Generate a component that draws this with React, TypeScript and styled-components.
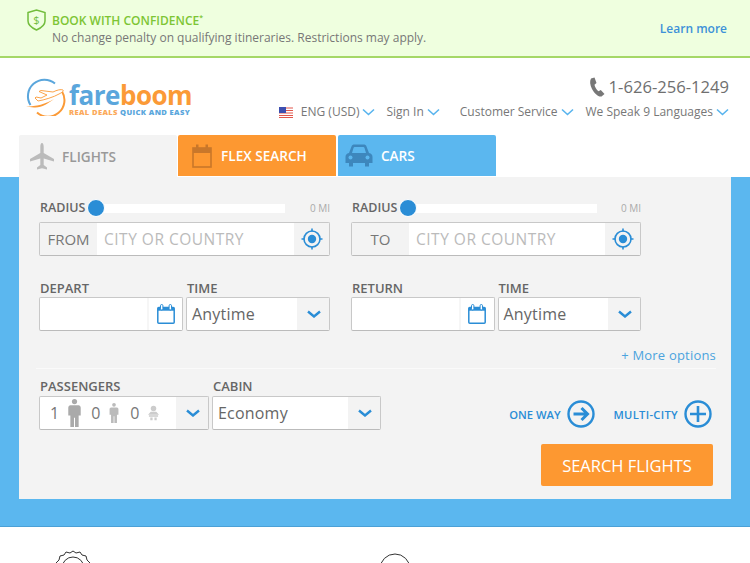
import React from "react";
import styled, { createGlobalStyle } from "styled-components";

const GlobalStyle = createGlobalStyle`
  html, body {
    margin: 0;
    padding: 0;
    background: #fff;
    font-family: "Open Sans", "Liberation Sans", sans-serif;
    color: #666;
    overflow: hidden;
  }
  * { box-sizing: border-box; }
`;

const Page = styled.div`
  width: 750px;
  height: 563px;
  overflow: hidden;
`;

/* confidence banner */
const Banner = styled.div`
  height: 58px;
  background: #efffdf;
  border-bottom: 2px solid #a5d867;
  padding: 9px 23px 0 27px;
  display: flex;
  align-items: flex-start;
`;
const BannerText = styled.div`
  margin-left: 6px;
  flex: 1;
  padding-top: 3px;
`;
const BannerTitle = styled.div`
  font-size: 12px;
  line-height: 17px;
  font-weight: 600;
  color: #7dc534;
  sup {
    font-size: 7px;
    line-height: 0;
    vertical-align: 5px;
  }
`;
const BannerSub = styled.div`
  font-size: 12px;
  line-height: 17px;
  color: #777;
`;
const LearnMore = styled.a`
  font-size: 12px;
  font-weight: 600;
  color: #3d92d8;
  margin-top: 11px;
`;

/* header */
const Header = styled.header`
  height: 77px;
  padding: 17px 21px 0 26px;
  display: flex;
  justify-content: space-between;
`;
const Logo = styled.div`
  display: flex;
  align-items: flex-start;
  padding-top: 1px;
`;
const LogoWords = styled.div`
  margin-left: -1px;
  margin-top: 7px;
`;
const LogoName = styled.div`
  font-size: 26px;
  line-height: 25px;
  font-weight: 700;
  letter-spacing: -0.5px;
  color: #5aa6dc;
  span { color: #fb9a37; }
`;
const LogoTag = styled.div`
  font-size: 7.6px;
  line-height: 9px;
  font-weight: 800;
  letter-spacing: 0.35px;
  color: #5aa6dc;
  white-space: nowrap;
  span { color: #fba95a; }
`;
const HeaderRight = styled.div`
  display: flex;
  flex-direction: column;
  align-items: flex-end;
`;
const Phone = styled.div`
  display: flex;
  align-items: center;
  gap: 4px;
  font-size: 16.6px;
  line-height: 24px;
  color: #6f6f6f;
`;
const NavRow = styled.nav`
  display: flex;
  margin-top: 3px;
`;
const NavItem = styled.div<{ $gap: number }>`
  display: flex;
  align-items: center;
  gap: 3px;
  font-size: 12px;
  line-height: 20px;
  color: #777;
  margin-left: ${(p) => p.$gap}px;
  white-space: nowrap;
`;
const NavLang = styled.span`
  margin-left: 5px;
`;

/* tabs */
const Tabs = styled.div`
  height: 42px;
  padding-left: 19px;
  display: flex;
  align-items: flex-start;
  gap: 1px;
`;
const Tab = styled.div<{ $bg: string; $color: string; $ml?: number; $pl: number; $h: number; $gap: number }>`
  width: 158px;
  height: ${(p) => p.$h}px;
  background: ${(p) => p.$bg};
  color: ${(p) => p.$color};
  margin-left: ${(p) => p.$ml ?? 0}px;
  border-radius: 2px 2px 0 0;
  display: flex;
  align-items: center;
  padding-left: ${(p) => p.$pl}px;
  gap: ${(p) => p.$gap}px;
  font-size: 13.6px;
  font-weight: 600;
`;

/* search band */
const Band = styled.div`
  height: 350px;
  background: #5bb7ef;
  border-bottom: 1px solid #4ba0d6;
  padding: 0 19px;
`;
const Panel = styled.div`
  height: 322px;
  background: #f3f3f3;
  padding: 23px 14px 0 20px;
`;
const TwoCols = styled.div`
  display: grid;
  grid-template-columns: 291px 290px;
  column-gap: 21px;
`;
const Col = styled.div`
  display: flex;
  flex-direction: column;
`;
const SliderRow = styled.div`
  display: flex;
  align-items: center;
  height: 16px;
  margin-left: 1px;
  margin-bottom: 6px;
`;
const FieldLabel = styled.label<{ $size?: number }>`
  display: block;
  font-size: ${(p) => p.$size ?? 13}px;
  line-height: 16px;
  font-weight: 600;
  color: #666;
  white-space: nowrap;
`;
const Track = styled.div`
  position: relative;
  width: 189px;
  height: 9px;
  margin-left: 11px;
  background: #fff;
`;
const Thumb = styled.div`
  position: absolute;
  left: -9px;
  top: -5px;
  width: 18px;
  height: 18px;
  border-radius: 50%;
  background: #2a8dd6;
  border: 1px solid #fff;
`;
const Miles = styled.div`
  margin-left: auto;
  font-size: 10px;
  color: #aaa;
`;
const Box = styled.div<{ $w?: number }>`
  display: flex;
  width: ${(p) => (p.$w ? `${p.$w}px` : "100%")};
  height: 34px;
  background: #fff;
  border: 1px solid #c8c8c8;
  border-bottom-color: #bbb;
  border-radius: 2px;
  overflow: hidden;
  flex: none;
`;
const PlaceLabel = styled.div`
  width: 57px;
  background: #f3f3f3;
  display: flex;
  align-items: center;
  justify-content: center;
  font-size: 15px;
  color: #777;
`;
const PlaceInput = styled.div`
  flex: 1;
  display: flex;
  align-items: center;
  padding-left: 7px;
  font-size: 15.5px;
  letter-spacing: 0.5px;
  color: #bbb;
`;
const BoxButton = styled.div<{ $w: number }>`
  width: ${(p) => p.$w}px;
  background: #f3f3f3;
  display: flex;
  align-items: center;
  justify-content: center;
  flex: none;
`;
const SelectButton = styled(BoxButton)`
  padding-left: 2px;
`;
const CalendarButton = styled(BoxButton)`
  background: #fff;
  border-left: 2px solid #f6f6f6;
`;
const Spacer = styled.div`
  flex: 1;
`;
const SelectText = styled.div`
  flex: 1;
  display: flex;
  align-items: center;
  padding-left: 5px;
  font-size: 16px;
  font-weight: 500;
  letter-spacing: 0.2px;
  color: #666;
`;
const DateRow = styled.div`
  display: grid;
  grid-template-columns: 1fr 1fr;
  column-gap: 3px;
  margin-top: 24px;
`;
const LabelledField = styled.div<{ $gap?: number }>`
  display: flex;
  flex-direction: column;
  gap: ${(p) => p.$gap ?? 1}px;
`;
const LabelPad = styled.div`
  padding-left: 1px;
`;
const MoreOptions = styled.div`
  margin: 14px 1px 0 -3px;
  height: 24px;
  line-height: 20px;
  text-align: right;
  font-size: 13px;
  color: #4ba3de;
  letter-spacing: 0.2px;
  border-bottom: 1px solid #fafafa;
`;
const BottomRow = styled.div`
  display: flex;
  margin-top: 9px;
`;
const BottomFields = styled.div`
  display: flex;
  gap: 3px;
`;
const PaxInner = styled.div`
  flex: 1;
  display: flex;
  align-items: center;
  padding-left: 10px;
  font-size: 16px;
  color: #777;
`;
const PaxCount = styled.span`
  margin-right: 9px;
`;
const PaxIcon = styled.svg<{ $mr: number }>`
  margin-right: ${(p) => p.$mr}px;
  flex: none;
`;
const TripLinks = styled.div`
  margin-left: auto;
  margin-right: 5px;
  margin-top: 21px;
  display: flex;
  align-items: center;
  height: 30px;
`;
const TripLink = styled.div<{ $ml?: number; $spacing?: number }>`
  display: flex;
  align-items: center;
  gap: 6px;
  margin-left: ${(p) => p.$ml ?? 0}px;
  font-size: 11.2px;
  letter-spacing: ${(p) => p.$spacing ?? 0}px;
  font-weight: 600;
  color: #2a8dd6;
`;
const SearchRow = styled.div`
  display: flex;
  justify-content: flex-end;
  margin-top: 14px;
  margin-right: 4px;
`;
const SearchButton = styled.button`
  width: 172px;
  height: 42px;
  border: 0;
  border-radius: 2px;
  background: #fd9831;
  color: #fff;
  font-family: inherit;
  font-size: 16.5px;
`;

/* footer peek */
const Footer = styled.div`
  position: relative;
  height: 36px;
  overflow: hidden;
`;
const FooterIcon = styled.svg<{ $left: number; $top: number }>`
  position: absolute;
  left: ${(p) => p.$left}px;
  top: ${(p) => p.$top}px;
`;

const Chevron = ({ color = "#58b4ee", w = 13, sw = 1.6 }: { color?: string; w?: number; sw?: number }) => (
  <svg width={w} height={8} viewBox={`0 0 ${w} 8`}>
    <path d={`M1 1.5 ${w / 2} 6.5 ${w - 1} 1.5`} fill="none" stroke={color} strokeWidth={sw} />
  </svg>
);

const SelectChevron = () => <Chevron color="#2a8dd6" w={14} sw={2.4} />;

const Target = () => (
  <svg width={22} height={22} viewBox="0 0 22 22">
    <circle cx="11" cy="11" r="8" fill="none" stroke="#2a8dd6" strokeWidth="1.6" />
    <circle cx="11" cy="11" r="4.2" fill="#2a8dd6" />
    <path d="M11 0.5V3.5M11 18.5V21.5M0.5 11H3.5M18.5 11H21.5" stroke="#2a8dd6" strokeWidth="1.6" />
  </svg>
);

const Calendar = () => (
  <svg width={18} height={20} viewBox="0 0 18 20">
    <rect x="0.8" y="3.5" width="16.4" height="15.7" rx="1" fill="none" stroke="#2a8dd6" strokeWidth="1.5" />
    <rect x="0.8" y="3.5" width="16.4" height="3.2" fill="#2a8dd6" />
    <rect x="3.5" y="0.5" width="2.4" height="5.5" rx="1.2" fill="#fff" stroke="#2a8dd6" strokeWidth="1" />
    <rect x="12.1" y="0.5" width="2.4" height="5.5" rx="1.2" fill="#fff" stroke="#2a8dd6" strokeWidth="1" />
  </svg>
);

const Shield = () => (
  <svg width={19} height={22} viewBox="0 0 19 22">
    <path d="M1 3.5 9.5 1 18 3.5V12c0 4-4 7-8.5 9C5 19 1 16 1 12Z" fill="none" stroke="#72bd3c" strokeWidth="1.5" />
    <text x="9.5" y="15" textAnchor="middle" fontSize="11" fontFamily="Open Sans" fill="#72bd3c">$</text>
  </svg>
);

const LogoMark = () => (
  <svg width={44} height={40} viewBox="0 0 44 40">
    <path d="M29 7.5A16.5 16.5 0 0 0 4.5 29" fill="none" stroke="#5aa6dc" strokeWidth="2" />
    <path d="M36 15.5A16.5 16.5 0 0 1 11 36.5" fill="none" stroke="#fb9a37" strokeWidth="2" />
    <path d="M37 14C35 13 31 14 27 16L15 14.5 13 15.5 21 19 15 22 10 21 9 22 12 25C18 24 28 21 33 18 36 16.5 38 15 37 14Z" fill="#fff" stroke="#fb9a37" strokeWidth="0.9" />
    <path d="M0 30.5C10 30.5 20 28 28 23 21 28 16 32 8 31.5 5 31.3 2 31 0 30.5Z" fill="#fb9a37" />
  </svg>
);

const Flag = () => (
  <svg width={14} height={11} viewBox="0 0 14 11">
    <rect width="14" height="11" fill="#fff" />
    <path d="M0 1H14M0 3.5H14M0 6H14M0 8.5H14M0 10.5H14" stroke="#e2574c" strokeWidth="1.1" />
    <rect width="7" height="6" fill="#3d4fb0" />
  </svg>
);

const PhoneIcon = () => (
  <svg width={16} height={20} viewBox="0 0 16 20">
    <path d="M2 1.5 5.5 0.5 7.5 6 5.5 7.8C5.8 10 7.5 13 9.5 14.2L11.8 13 15.5 17 12.5 19.5C9 20 5.5 16.5 3 12 1 8 0.5 4 2 1.5Z" fill="#777" />
  </svg>
);

const PlaneIcon = () => (
  <svg width={24} height={27} viewBox="0 0 24 27">
    <path d="M12 0C13.2 0 13.7 2 13.7 4V10L24 16V18.5L13.7 15.5V22L17 24.5V26.5L12 25.3 7 26.5V24.5L10.3 22V15.5L0 18.5V16L10.3 10V4C10.3 2 10.8 0 12 0Z" fill="#bbb" />
  </svg>
);

const CarIcon = () => (
  <svg width={28} height={23} viewBox="0 0 28 23">
    <path d="M4 9 6.5 2.5C7 1 8 .5 9.5 .5H18.5C20 .5 21 1 21.5 2.5L24 9C26.5 9.5 27.5 11 27.5 13V19H24V22.5H20V19H8V22.5H4V19H.5V13C.5 11 1.5 9.5 4 9Z" fill="#3d87bd" />
    <path d="M7 9 8.5 4C8.8 3 9.2 3 10 3H18C18.8 3 19.2 3 19.5 4L21 9Z" fill="#5bb7ef" />
    <circle cx="5.5" cy="13.5" r="2" fill="#5bb7ef" />
    <circle cx="22.5" cy="13.5" r="2" fill="#5bb7ef" />
  </svg>
);

const FlexCalendar = () => (
  <svg width={20} height={24} viewBox="0 0 20 24">
    <rect x="1" y="4" width="18" height="19" fill="none" stroke="#c9772a" strokeWidth="1.6" />
    <rect x="1" y="4" width="18" height="5" fill="#c9772a" />
    <rect x="4" y="0.5" width="2.5" height="5" fill="#c9772a" />
    <rect x="13.5" y="0.5" width="2.5" height="5" fill="#c9772a" />
  </svg>
);

const Person = ({ w, h, color, mr }: { w: number; h: number; color: string; mr: number }) => (
  <PaxIcon $mr={mr} width={w} height={h} viewBox="0 0 12 27">
    <circle cx="6" cy="2.5" r="2.5" fill={color} />
    <path d="M2 6H10C11 6 12 7 12 8.5V16H10V27H6.5V18H5.5V27H2V16H0V8.5C0 7 1 6 2 6Z" fill={color} />
  </PaxIcon>
);

const Baby = () => (
  <PaxIcon $mr={0} width={11} height={16} viewBox="0 0 12 16">
    <circle cx="6" cy="3" r="3" fill="#ccc" />
    <path d="M3 6.5H9L12 10H0ZM1 10.5H11V12H1ZM2.5 13H5V16H2.5ZM7 13H9.5V16H7Z" fill="#ccc" />
  </PaxIcon>
);

const RoundIcon = ({ children }: { children: React.ReactNode }) => (
  <svg width={28} height={28} viewBox="0 0 28 28">
    <circle cx="14" cy="14" r="12.5" fill="none" stroke="#2a8dd6" strokeWidth="2.4" />
    {children}
  </svg>
);

const PlaceField = ({ label }: { label: string }) => (
  <Box>
    <PlaceLabel>{label}</PlaceLabel>
    <PlaceInput>CITY OR COUNTRY</PlaceInput>
    <BoxButton $w={35}>
      <Target />
    </BoxButton>
  </Box>
);

const SearchColumn = ({ from, date }: { from: string; date: string }) => (
  <Col>
    <SliderRow>
      <FieldLabel $size={12.5}>RADIUS</FieldLabel>
      <Track>
        <Thumb />
      </Track>
      <Miles>0 MI</Miles>
    </SliderRow>
    <PlaceField label={from} />
    <DateRow>
      <LabelledField>
        <LabelPad>
          <FieldLabel>{date}</FieldLabel>
        </LabelPad>
        <Box>
          <Spacer />
          <CalendarButton $w={35}>
            <Calendar />
          </CalendarButton>
        </Box>
      </LabelledField>
      <LabelledField>
        <LabelPad>
          <FieldLabel>TIME</FieldLabel>
        </LabelPad>
        <Box>
          <SelectText>Anytime</SelectText>
          <SelectButton $w={32}>
            <SelectChevron />
          </SelectButton>
        </Box>
      </LabelledField>
    </DateRow>
  </Col>
);

export default function App() {
  return (
    <Page>
      <GlobalStyle />
      <Banner>
        <Shield />
        <BannerText>
          <BannerTitle>
            BOOK WITH CONFIDENCE<sup>*</sup>
          </BannerTitle>
          <BannerSub>No change penalty on qualifying itineraries. Restrictions may apply.</BannerSub>
        </BannerText>
        <LearnMore>Learn more</LearnMore>
      </Banner>

      <Header>
        <Logo>
          <LogoMark />
          <LogoWords>
            <LogoName>
              fare<span>boom</span>
            </LogoName>
            <LogoTag>
              <span>REAL DEALS</span> QUICK AND EASY
            </LogoTag>
          </LogoWords>
        </Logo>
        <HeaderRight>
          <Phone>
            <PhoneIcon />
            1-626-256-1249
          </Phone>
          <NavRow>
            <NavItem $gap={0}>
              <Flag />
              <NavLang>ENG (USD)</NavLang>
              <Chevron />
            </NavItem>
            <NavItem $gap={11}>
              Sign In
              <Chevron />
            </NavItem>
            <NavItem $gap={20}>
              Customer Service
              <Chevron />
            </NavItem>
            <NavItem $gap={12}>
              We Speak 9 Languages
              <Chevron />
            </NavItem>
          </NavRow>
        </HeaderRight>
      </Header>

      <Tabs>
        <Tab $bg="#f3f3f3" $color="#999" $pl={11} $h={42} $gap={8}>
          <PlaneIcon />
          FLIGHTS
        </Tab>
        <Tab $bg="#fd9831" $color="#fff" $pl={14} $h={41} $gap={9}>
          <FlexCalendar />
          FLEX SEARCH
        </Tab>
        <Tab $bg="#5bb7ef" $color="#fff" $ml={1} $pl={7} $h={41} $gap={8}>
          <CarIcon />
          CARS
        </Tab>
      </Tabs>

      <Band>
        <Panel>
          <TwoCols>
            <SearchColumn from="FROM" date="DEPART" />
            <SearchColumn from="TO" date="RETURN" />
          </TwoCols>
          <MoreOptions>+ More options</MoreOptions>
          <BottomRow>
            <BottomFields>
              <LabelledField $gap={2}>
                <LabelPad>
                  <FieldLabel>PASSENGERS</FieldLabel>
                </LabelPad>
                <Box $w={170}>
                  <PaxInner>
                    <PaxCount>1</PaxCount>
                    <Person w={13} h={28} color="#aaa" mr={10} />
                    <PaxCount>0</PaxCount>
                    <Person w={10} h={20} color="#bbb" mr={11} />
                    <PaxCount>0</PaxCount>
                    <Baby />
                  </PaxInner>
                  <SelectButton $w={32}>
                    <SelectChevron />
                  </SelectButton>
                </Box>
              </LabelledField>
              <LabelledField $gap={2}>
                <LabelPad>
                  <FieldLabel>CABIN</FieldLabel>
                </LabelPad>
                <Box $w={169}>
                  <SelectText>Economy</SelectText>
                  <SelectButton $w={32}>
                    <SelectChevron />
                  </SelectButton>
                </Box>
              </LabelledField>
            </BottomFields>
            <TripLinks>
              <TripLink>
                ONE WAY
                <RoundIcon>
                  <path d="M6.5 14H20M14.5 8 20.5 14 14.5 20" fill="none" stroke="#2a8dd6" strokeWidth="3" />
                </RoundIcon>
              </TripLink>
              <TripLink $ml={19} $spacing={0.3}>
                MULTI-CITY
                <RoundIcon>
                  <path d="M14 6V22M6 14H22" fill="none" stroke="#2a8dd6" strokeWidth="2.6" />
                </RoundIcon>
              </TripLink>
            </TripLinks>
          </BottomRow>
          <SearchRow>
            <SearchButton>SEARCH FLIGHTS</SearchButton>
          </SearchRow>
        </Panel>
      </Band>

      <Footer>
        <FooterIcon $left={55} $top={23} width={36} height={36} viewBox="0 0 36 36">
          <path d="M18 1 21 3 25 2 27 5 31 6 32 10 35 13 34 17V36H2V17L1 13 4 10 5 6 9 5 11 2 15 3Z" fill="none" stroke="#333" strokeWidth="1" />
          <circle cx="18" cy="18" r="11" fill="none" stroke="#333" strokeWidth="1" />
        </FooterIcon>
        <FooterIcon $left={379} $top={26} width={32} height={32} viewBox="0 0 32 32">
          <circle cx="16" cy="16" r="15" fill="none" stroke="#333" strokeWidth="1" />
        </FooterIcon>
      </Footer>
    </Page>
  );
}
